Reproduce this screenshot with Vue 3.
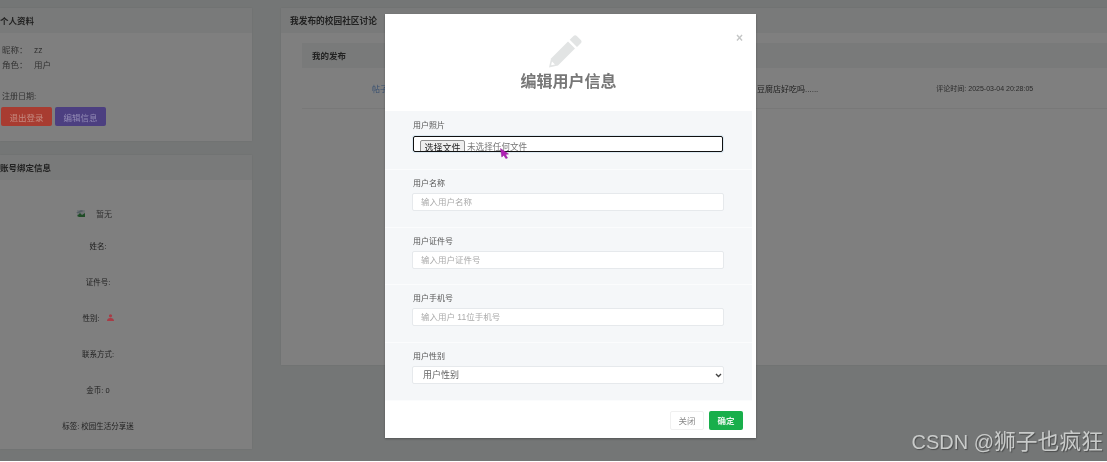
<script setup>
const fields = [
  { label: '用户名称', placeholder: '输入用户名称' },
  { label: '用户证件号', placeholder: '输入用户证件号' },
  { label: '用户手机号', placeholder: '输入用户 11位手机号' }
]
const details = ['姓名:', '证件号:']
</script>

<template>
  <div class="root">
    <div class="page">
      <div class="left">
        <section class="card profile">
          <h3 class="card-head">个人资料</h3>
          <div class="profile-body">
            <p class="line">昵称： <span class="val">zz</span></p>
            <p class="line">角色： <span class="val">用户</span></p>
            <p class="date">注册日期:</p>
            <div class="actions">
              <button class="btn red">退出登录</button>
              <button class="btn purple">编辑信息</button>
            </div>
          </div>
        </section>
        <section class="card bind">
          <h3 class="card-head">账号绑定信息</h3>
          <div class="bind-body">
            <p class="row first-row">
              <svg class="pic" viewBox="0 0 10 9" width="10" height="9">
                <rect x="1" y="1" width="8" height="6" fill="#dfe6ea" />
                <path d="M1 7l3-3 2 2 3-2v4H3z" fill="#3f9b4f" />
                <path d="M0 4l5-3 3 1-5 2z" fill="#a9bcc9" />
              </svg>
              <span class="none">暂无</span>
            </p>
            <p v-for="d in details" :key="d" class="row">{{ d }}</p>
            <p class="row">性别:
              <svg class="person" viewBox="0 0 7 7" width="7" height="7">
                <circle cx="3.500" cy="1.800" r="1.600" fill="#a83c46" />
                <path d="M0 7c0-2 1.200-3 3.500-3s3.500 1 3.500 3z" fill="#a83c46" />
              </svg>
            </p>
            <p class="row">联系方式:</p>
            <p class="row">金币:   0</p>
            <p class="row">标签:   校园生活分享迷</p>
          </div>
        </section>
      </div>
      <section class="card posts">
        <h3 class="card-head posts-head">我发布的校园社区讨论</h3>
        <div class="inner">
          <h4 class="inner-head">我的发布</h4>
          <div class="post-row">
            <a class="post-link">帖子</a>
            <span class="post-title">豆腐店好吃吗......</span>
            <span class="post-time">评论时间:  2025-03-04 20:28:05</span>
          </div>
        </div>
      </section>
    </div>

    <div class="overlay">
      <div class="modal">
        <header class="modal-head">
          <span class="close">×</span>
          <svg class="pencil" viewBox="0 0 34 33" width="34" height="33">
            <path d="M20 6.500 27 13.500 10 30.500 1 32.500 3 23.500Z" fill="#e2e4e4" />
            <path d="M21.700 4.800 25.500 1c1-1 2.300-1 3.300 0l4 4c1 1 1 2.300 0 3.300l-3.800 3.800Z" fill="#e2e4e4" />
            <path d="M4 26.500 7 29.500 3.500 30.300 3.200 29.800Z" fill="#fff" />
          </svg>
          <h2 class="title">编辑用户信息</h2>
        </header>
        <div class="form-row first">
          <label class="label">用户照片</label>
          <div class="file">
            <span class="file-btn">选择文件</span>
            <span class="file-text">未选择任何文件</span>
          </div>
          <svg class="cursor" viewBox="0 0 9 11" width="9" height="11">
            <path d="M0.500 0.500 8.500 6 5.500 6.500 7.500 10 5.800 10.500 3.800 7.200 1.800 9Z" fill="#b01fb5" stroke="#8e1e94" stroke-width=".5" />
          </svg>
        </div>
        <div v-for="f in fields" :key="f.label" class="form-row">
          <label class="label">{{ f.label }}</label>
          <input class="control" type="text" :placeholder="f.placeholder" />
        </div>
        <div class="form-row">
          <label class="label">用户性别</label>
          <div class="select-wrap">
            <select class="control select">
              <option>用户性别</option>
            </select>
            <svg class="chevron" viewBox="0 0 7 5" width="7" height="5">
              <path d="M1 1 3.500 3.500 6 1" fill="none" stroke="#444" stroke-width="1.400" />
            </svg>
          </div>
        </div>
        <footer class="modal-foot">
          <button class="foot-btn ghost">关闭</button>
          <button class="foot-btn ok">确定</button>
        </footer>
      </div>
      <div class="watermark">CSDN @<span class="cjk">狮子也疯狂</span></div>
    </div>
  </div>
</template>

<style>
html,
body {
  background: #fff;
}
</style>

<style scoped>
.root {
  position: relative;
  width: 1107px;
  height: 461px;
  overflow: hidden;
  background: #e9edec;
  font-family: "Liberation Sans", "Noto Sans CJK SC", sans-serif;
  font-size: 8px;
  color: #666;
  filter: blur(0.6px);
}
p,
h2,
h3,
h4 {
  margin: 0;
}
.page {
  display: grid;
  grid-template-columns: 252px 826px;
  column-gap: 29px;
  align-items: start;
  padding-top: 8px;
}
.left {
  display: flex;
  flex-direction: column;
  gap: 14px;
}
.card {
  background: #fff;
  box-shadow: 0 0 2px rgba(0, 0, 0, 0.08);
}
.card-head {
  height: 25px;
  line-height: 26px;
  background: #f3f5f4;
  color: #444;
  font-size: 8.500px;
  font-weight: 700;
}
.profile {
  height: 133px;
}
.profile-body {
  padding: 10px 0 0 2px;
}
.line {
  height: 15px;
  line-height: 15px;
  color: #666;
  font-size: 8.500px;
}
.val {
  margin-left: 4px;
}
.date {
  margin-top: 17px;
  height: 13px;
  line-height: 13px;
  font-size: 8px;
  color: #666;
}
.actions {
  display: flex;
  gap: 3px;
  margin-top: 4px;
  margin-left: -1px;
}
.btn {
  position: relative;
  z-index: 1;
  width: 51px;
  height: 19px;
  padding: 0;
  border: 0;
  border-radius: 2px;
  font: 8.500px "Liberation Sans", "Noto Sans CJK SC", sans-serif;
}
.red {
  background: #a83c31;
  color: #c58a80;
}
.purple {
  background: #4c3f80;
  color: #9189b3;
}
.bind {
  height: 294px;
}
.bind-body {
  display: flex;
  flex-direction: column;
  align-items: center;
  padding: 19px 56px 0 0;
}
.row {
  display: flex;
  align-items: center;
  justify-content: center;
  height: 36px;
  color: #444;
  font-size: 7.500px;
  white-space: pre;
}
.first-row {
  height: 28px;
}
.pic {
  margin-right: 10px;
}
.none {
  margin-right: 8px;
  color: #666;
  font-size: 8px;
}
.person {
  position: relative;
  z-index: 1;
  margin-left: 5px;
}
.posts {
  height: 357px;
}
.posts-head {
  padding-left: 9px;
  font-size: 8.700px;
}
.inner {
  margin: 10px 0 0 21px;
}
.inner-head {
  height: 25px;
  line-height: 26px;
  padding-left: 10px;
  background: #f3f5f4;
  color: #444;
  font-size: 8.500px;
  font-weight: 700;
}
.post-row {
  display: flex;
  align-items: center;
  height: 40px;
  border-bottom: 1px solid #f0f0f0;
}
.post-link {
  margin-left: 70px;
  color: #6f9fe0;
}
.post-title {
  margin-left: 369px;
  color: #444;
  font-size: 8px;
}
.post-time {
  margin-left: 118px;
  color: #555;
  font-size: 7px;
  white-space: pre;
}
.overlay {
  position: absolute;
  inset: 0;
  padding: 14px 0 0 385px;
  background: rgba(0, 0, 0, 0.5);
}
.modal {
  position: relative;
  z-index: 2;
  width: 371px;
  height: 424px;
  padding-right: 4px;
  box-sizing: border-box;
  background: #fff;
  box-shadow: 0 1px 2px rgba(0, 0, 0, 0.3);
}
.modal-head {
  display: flex;
  flex-direction: column;
  align-items: center;
  height: 97px;
  padding-top: 21px;
  box-sizing: border-box;
}
.close {
  position: absolute;
  top: 17px;
  right: 13px;
  color: #c4c6c6;
  font-size: 12px;
  font-weight: 700;
  line-height: 14px;
}
.pencil {
  display: block;
  margin-right: 7px;
}
.title {
  margin-top: 3px;
  color: #777;
  font-size: 16px;
  line-height: 21px;
  font-weight: 700;
}
.form-row {
  position: relative;
  height: 57.700px;
  padding: 8px 27px 0;
  box-sizing: border-box;
  background: #f5f7f9;
  border-bottom: 1px solid #fbfcfd;
}
.form-row.first {
  height: 59px;
  padding-top: 9px;
}
.label {
  display: block;
  height: 10px;
  line-height: 11px;
  margin: 0 0 5px 1px;
  color: #555;
  font-size: 8px;
}
.first .label {
  margin-bottom: 6px;
}
.control {
  display: block;
  width: 312px;
  height: 18px;
  padding: 0 8px;
  box-sizing: border-box;
  border: 1px solid #e6e9ec;
  border-radius: 2px;
  outline: 0;
  background: #fff;
  color: #666;
  font: 8.500px "Liberation Sans", "Noto Sans CJK SC", sans-serif;
}
.control::placeholder {
  color: #aaa;
}
.select-wrap {
  position: relative;
}
.select {
  appearance: none;
  padding: 0 10px;
  color: #666;
  font-size: 9px;
}
.chevron {
  position: absolute;
  right: 3px;
  top: 7px;
}
.file {
  display: flex;
  align-items: flex-start;
  width: 310px;
  height: 16px;
  margin-left: 1px;
  padding: 3px 0 0 6px;
  box-sizing: border-box;
  overflow: hidden;
  border: 1px solid #111;
  border-radius: 2px;
  background: #fff;
  box-shadow: 0 0 0 1px #dce9f2;
}
.file-btn {
  flex: none;
  width: 45px;
  height: 16px;
  box-sizing: border-box;
  border: 1px solid #8f8f8f;
  border-radius: 2px;
  background: #efefef;
  color: #222;
  font-size: 9px;
  line-height: 14px;
  text-align: center;
}
.file-text {
  margin-left: 2px;
  color: #777;
  font-size: 8.600px;
  line-height: 15px;
  white-space: nowrap;
}
.cursor {
  position: absolute;
  left: 115px;
  top: 37px;
}
.modal-foot {
  display: flex;
  justify-content: flex-end;
  gap: 5px;
  height: 38px;
  padding: 10px 9px 0 0;
  box-sizing: border-box;
}
.foot-btn {
  width: 34px;
  height: 19px;
  padding: 0;
  border-radius: 2px;
  font: 8.500px "Liberation Sans", "Noto Sans CJK SC", sans-serif;
}
.ghost {
  border: 1px solid #f0f0f0;
  background: #fff;
  color: #888;
}
.ok {
  border: 0;
  background: #18af4b;
  color: #e9f7ee;
  font-weight: 700;
}
.watermark {
  position: absolute;
  right: 4px;
  bottom: 7px;
  color: #c9cbca;
  font-size: 20px;
  line-height: 24px;
  white-space: nowrap;
  text-shadow: 1px 1px 1px rgba(0, 0, 0, 0.35);
}
.cjk {
  font-size: 21.800px;
}
</style>
